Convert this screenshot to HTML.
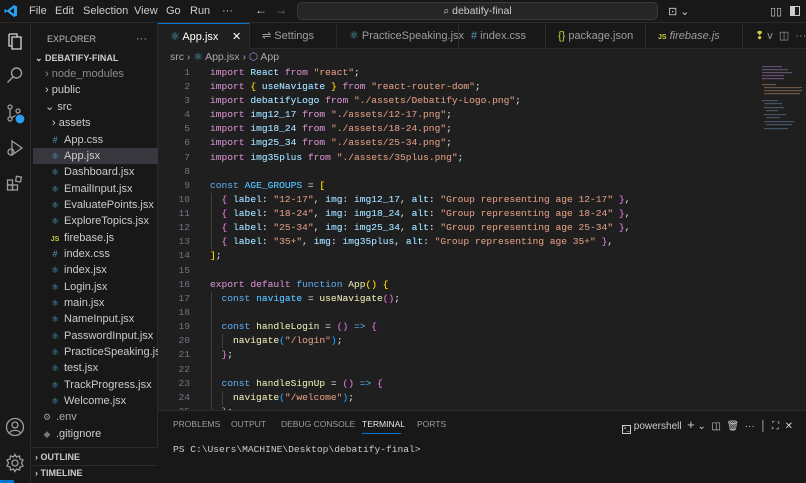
<!DOCTYPE html>
<html><head><meta charset="utf-8">
<style>
*{margin:0;padding:0;box-sizing:border-box}
body{width:806px;height:483px;overflow:hidden;background:#1f1f1f;font-family:"Liberation Sans",sans-serif;color:#ccc;position:relative;font-size:11px}
.abs{position:absolute}
#title{left:0;top:0;width:806px;height:23px;background:#181818;border-bottom:1px solid #2b2b2b}
#title .m{position:absolute;top:5px;font-size:11px;color:#ccc}
#search{left:297px;top:2px;width:361px;height:18px;background:#262626;border:1px solid #3a3a3a;border-radius:5px;color:#ccc;font-size:10.5px;text-align:center;line-height:16px}
#act{left:0;top:23px;width:31px;height:460px;background:#181818;border-right:1px solid #2b2b2b}
#side{left:31px;top:23px;width:127px;height:460px;background:#181818;border-right:1px solid #2b2b2b}
.row{position:absolute;left:0;width:127px;height:16px;line-height:16px;font-size:11px;color:#ccc;white-space:nowrap}
.ic{display:inline-block;width:12px;font-size:9px;color:#4fa6c7;text-align:center;margin-right:3px}
#tabs{left:158px;top:23px;width:648px;height:26px;background:#181818;border-bottom:1px solid #2b2b2b}
.tab{position:absolute;top:0;height:26px;line-height:26px;font-size:11px;color:#9d9d9d;border-right:1px solid #2b2b2b;padding-left:12px;white-space:nowrap}
#code{left:158px;top:49px;width:648px;height:361px;background:#1f1f1f}
.ln{position:absolute;left:160px;width:30px;text-align:right;font-family:"Liberation Mono",monospace;font-size:9.6px;color:#6e7681;height:14px;line-height:14px}
.cl{position:absolute;left:210px;font-family:"Liberation Mono",monospace;font-size:9.6px;color:#d4d4d4;white-space:pre;height:14px;line-height:14px;text-shadow:0 0 0.3px currentColor}
.k{color:#c586c0}.b{color:#569cd6}.v{color:#9cdcfe}.c{color:#4fc1ff}.s{color:#ce9178}.f{color:#dcdcaa}.y{color:#ffd700}.p{color:#da70d6}.l{color:#179fff}
#panel{left:158px;top:410px;width:648px;height:73px;background:#181818;border-top:1px solid #2b2b2b}
.pt{position:absolute;top:8px;font-size:8.5px;color:#9d9d9d}
</style></head><body>

<div id="title" class="abs">
  <svg class="abs" style="left:4px;top:4px" width="14" height="14" viewBox="0 0 14 14"><path d="M10 1 L13 2.5 V11.5 L10 13 L3 7.5 L1 9 L0.5 8.5 V5.5 L1 5 L3 6.5 Z M10 4 L6 7 L10 10 Z" fill="#2a9df4"/></svg>
  <span class="m" style="left:29px">File</span>
  <span class="m" style="left:55px">Edit</span>
  <span class="m" style="left:83px">Selection</span>
  <span class="m" style="left:134px">View</span>
  <span class="m" style="left:166px">Go</span>
  <span class="m" style="left:190px">Run</span>
  <span class="m" style="left:222px">···</span>
  <span class="m" style="left:255px;font-size:12px;top:3px">←</span>
  <span class="m" style="left:275px;font-size:12px;top:3px;color:#777">→</span>
  <div id="search" class="abs">⌕ debatify-final</div>
  <span class="m" style="left:668px">⊡ ⌄</span>
  <span class="m" style="left:770px">▯▯</span>
  <span class="abs" style="left:790px;top:6px;width:10px;height:10px;border:1px solid #ccc;border-left:5px solid #ccc"></span>
</div>

<div id="act" class="abs">
  <svg class="abs" style="left:6px;top:9px" width="18" height="20" viewBox="0 0 18 20" fill="none" stroke="#d7d7d7" stroke-width="1.3"><path d="M6 5 V17 H15 V5 Z M3 2 H11 V5 M3 2 V14 H6"/></svg>
  <svg class="abs" style="left:6px;top:43px" width="18" height="18" viewBox="0 0 18 18" fill="none" stroke="#9d9d9d" stroke-width="1.4"><circle cx="10.5" cy="7" r="5"/><path d="M7 11 L1.5 16.5"/></svg>
  <svg class="abs" style="left:5px;top:80px" width="22" height="22" viewBox="0 0 22 22" fill="none" stroke="#9d9d9d" stroke-width="1.3"><circle cx="5" cy="4" r="2"/><circle cx="5" cy="16" r="2"/><circle cx="13" cy="8" r="2"/><path d="M5 6 V14 M13 10 C13 13 8 13 6 15"/><circle cx="15" cy="16" r="5" fill="#2a9df4" stroke="#181818"/></svg>
  <svg class="abs" style="left:6px;top:116px" width="18" height="18" viewBox="0 0 18 18" fill="none" stroke="#9d9d9d" stroke-width="1.3"><path d="M6 2 L16 9 L6 16 Z"/><circle cx="5" cy="13" r="3"/></svg>
  <svg class="abs" style="left:6px;top:152px" width="18" height="18" viewBox="0 0 18 18" fill="none" stroke="#9d9d9d" stroke-width="1.3"><rect x="1.5" y="5" width="5" height="5"/><rect x="1.5" y="10" width="5" height="5"/><rect x="6.5" y="10" width="5" height="5"/><rect x="10" y="1.5" width="5" height="5" transform="rotate(10 12 4)"/></svg>
  <svg class="abs" style="left:5px;top:394px" width="20" height="20" viewBox="0 0 20 20" fill="none" stroke="#9d9d9d" stroke-width="1.3"><circle cx="10" cy="10" r="8.5"/><circle cx="10" cy="8" r="3"/><path d="M4.5 16 C6 12.5 14 12.5 15.5 16"/></svg>
  <svg class="abs" style="left:5px;top:430px" width="20" height="20" viewBox="0 0 20 20" fill="none" stroke="#9d9d9d" stroke-width="1.3"><circle cx="10" cy="10" r="3"/><path d="M10 1.5 L11.5 4 L14.5 3 L15 6 L18 7 L16.5 10 L18 13 L15 14 L14.5 17 L11.5 16 L10 18.5 L8.5 16 L5.5 17 L5 14 L2 13 L3.5 10 L2 7 L5 6 L5.5 3 L8.5 4 Z"/></svg>
</div>

<div id="side" class="abs">
  <div class="row" style="top:8px;left:16px;font-size:9px;color:#bbb">EXPLORER</div>
  <div class="row" style="top:8px;left:105px;width:20px;color:#bbb">···</div>
  <div class="row" style="top:27px;left:4px;font-size:9px;font-weight:bold;color:#ccc">⌄ DEBATIFY-FINAL</div>
  <div class="row" style="top:43px;left:14px;color:#8c8c8c">› node_modules</div>
  <div class="row" style="top:59px;left:14px">› public</div>
  <div class="row" style="top:76px;left:14px">⌄ src</div>
  <div class="row" style="top:92px;left:21px">› assets</div>
  <div class="row" style="top:109px;left:18px"><span class="ic" style="color:#519aba">#</span>App.css</div>
  <div class="row" style="top:125px;left:2px;padding-left:16px;background:#37373d;width:125px"><span class="ic">⚛</span>App.jsx</div>
  <div class="row" style="top:141px;left:18px"><span class="ic">⚛</span>Dashboard.jsx</div>
  <div class="row" style="top:158px;left:18px"><span class="ic">⚛</span>EmailInput.jsx</div>
  <div class="row" style="top:174px;left:18px"><span class="ic">⚛</span>EvaluatePoints.jsx</div>
  <div class="row" style="top:190px;left:18px"><span class="ic">⚛</span>ExploreTopics.jsx</div>
  <div class="row" style="top:207px;left:18px"><span class="ic" style="color:#cbcb41;font-weight:bold;font-size:7px">JS</span>firebase.js</div>
  <div class="row" style="top:223px;left:18px"><span class="ic" style="color:#519aba">#</span>index.css</div>
  <div class="row" style="top:239px;left:18px"><span class="ic">⚛</span>index.jsx</div>
  <div class="row" style="top:256px;left:18px"><span class="ic">⚛</span>Login.jsx</div>
  <div class="row" style="top:272px;left:18px"><span class="ic">⚛</span>main.jsx</div>
  <div class="row" style="top:288px;left:18px"><span class="ic">⚛</span>NameInput.jsx</div>
  <div class="row" style="top:305px;left:18px"><span class="ic">⚛</span>PasswordInput.jsx</div>
  <div class="row" style="top:321px;left:18px"><span class="ic">⚛</span>PracticeSpeaking.jsx</div>
  <div class="row" style="top:337px;left:18px"><span class="ic">⚛</span>test.jsx</div>
  <div class="row" style="top:354px;left:18px"><span class="ic">⚛</span>TrackProgress.jsx</div>
  <div class="row" style="top:370px;left:18px"><span class="ic">⚛</span>Welcome.jsx</div>
  <div class="row" style="top:386px;left:10px;color:#aaa"><span class="ic" style="color:#999">⚙</span>.env</div>
  <div class="row" style="top:403px;left:10px"><span class="ic" style="color:#777">◆</span>.gitignore</div>
  <div class="abs" style="left:0;top:424px;width:127px;height:36px;background:#181818;border-top:1px solid #2b2b2b"></div>
  <div class="row" style="top:426px;left:4px;font-size:9px;font-weight:bold">› OUTLINE</div>
  <div class="abs" style="left:0;top:442px;width:127px;border-top:1px solid #2b2b2b"></div>
  <div class="row" style="top:442px;left:4px;font-size:9px;font-weight:bold">› TIMELINE</div>
</div>
<div class="abs" style="left:0;top:480px;width:14px;height:3px;background:#0078d4"></div>

<div id="tabs" class="abs">
  <div class="tab" style="left:0;width:92px;background:#1f1f1f;color:#fff;border-top:1px solid #0078d4;height:27px"><span style="color:#4fa6c7">⚛</span> App.jsx<span style="position:absolute;left:74px">✕</span></div>
  <div class="tab" style="left:92px;width:87px">⇌ Settings</div>
  <div class="tab" style="left:179px;width:122px"><span style="color:#4fa6c7">⚛</span> PracticeSpeaking.jsx</div>
  <div class="tab" style="left:301px;width:87px"><span style="color:#519aba">#</span> index.css</div>
  <div class="tab" style="left:388px;width:100px"><span style="color:#cbcb41">{}</span> package.json</div>
  <div class="tab" style="left:488px;width:97px"><span style="color:#cbcb41;font-size:7px;font-weight:bold">JS</span> <i>firebase.js</i></div>
  <div class="tab" style="left:585px;border:none"><span style="color:#cbcb41">❢</span> v &nbsp;◫ &nbsp;···</div>
</div>

<div id="code" class="abs"></div>
<div class="abs" style="left:170px;top:51px;font-size:10.5px;color:#a9a9a9;white-space:nowrap">src › <span style="color:#4fa6c7">⚛</span> App.jsx › <span style="color:#b180d7">⬡</span> App</div>

<div class="ln" style="top:66px">1</div><div class="cl" style="top:66px"><span class="k">import</span> <span class="v">React</span> <span class="k">from</span> <span class="s">"react"</span>;</div>
<div class="ln" style="top:80px">2</div><div class="cl" style="top:80px"><span class="k">import</span> <span class="y">{</span> <span class="v">useNavigate</span> <span class="y">}</span> <span class="k">from</span> <span class="s">"react-router-dom"</span>;</div>
<div class="ln" style="top:94px">3</div><div class="cl" style="top:94px"><span class="k">import</span> <span class="v">debatifyLogo</span> <span class="k">from</span> <span class="s">"./assets/Debatify-Logo.png"</span>;</div>
<div class="ln" style="top:108px">4</div><div class="cl" style="top:108px"><span class="k">import</span> <span class="v">img12_17</span> <span class="k">from</span> <span class="s">"./assets/12-17.png"</span>;</div>
<div class="ln" style="top:122px">5</div><div class="cl" style="top:122px"><span class="k">import</span> <span class="v">img18_24</span> <span class="k">from</span> <span class="s">"./assets/18-24.png"</span>;</div>
<div class="ln" style="top:136px">6</div><div class="cl" style="top:136px"><span class="k">import</span> <span class="v">img25_34</span> <span class="k">from</span> <span class="s">"./assets/25-34.png"</span>;</div>
<div class="ln" style="top:151px">7</div><div class="cl" style="top:151px"><span class="k">import</span> <span class="v">img35plus</span> <span class="k">from</span> <span class="s">"./assets/35plus.png"</span>;</div>
<div class="ln" style="top:165px">8</div>
<div class="ln" style="top:179px">9</div><div class="cl" style="top:179px"><span class="b">const</span> <span class="c">AGE_GROUPS</span> = <span class="y">[</span></div>
<div class="ln" style="top:193px">10</div><div class="cl" style="top:193px">  <span class="p">{</span> <span class="v">label</span>: <span class="s">"12-17"</span>, <span class="v">img</span>: <span class="v">img12_17</span>, <span class="v">alt</span>: <span class="s">"Group representing age 12-17"</span> <span class="p">}</span>,</div>
<div class="ln" style="top:207px">11</div><div class="cl" style="top:207px">  <span class="p">{</span> <span class="v">label</span>: <span class="s">"18-24"</span>, <span class="v">img</span>: <span class="v">img18_24</span>, <span class="v">alt</span>: <span class="s">"Group representing age 18-24"</span> <span class="p">}</span>,</div>
<div class="ln" style="top:221px">12</div><div class="cl" style="top:221px">  <span class="p">{</span> <span class="v">label</span>: <span class="s">"25-34"</span>, <span class="v">img</span>: <span class="v">img25_34</span>, <span class="v">alt</span>: <span class="s">"Group representing age 25-34"</span> <span class="p">}</span>,</div>
<div class="ln" style="top:235px">13</div><div class="cl" style="top:235px">  <span class="p">{</span> <span class="v">label</span>: <span class="s">"35+"</span>, <span class="v">img</span>: <span class="v">img35plus</span>, <span class="v">alt</span>: <span class="s">"Group representing age 35+"</span> <span class="p">}</span>,</div>
<div class="ln" style="top:249px">14</div><div class="cl" style="top:249px"><span class="y">]</span>;</div>
<div class="ln" style="top:264px">15</div>
<div class="ln" style="top:278px">16</div><div class="cl" style="top:278px"><span class="k">export</span> <span class="k">default</span> <span class="b">function</span> <span class="f">App</span><span class="y">()</span> <span class="y">{</span></div>
<div class="ln" style="top:292px">17</div><div class="cl" style="top:292px">  <span class="b">const</span> <span class="c">navigate</span> = <span class="f">useNavigate</span><span class="p">()</span>;</div>
<div class="ln" style="top:306px">18</div>
<div class="ln" style="top:320px">19</div><div class="cl" style="top:320px">  <span class="b">const</span> <span class="f">handleLogin</span> = <span class="p">()</span> <span class="b">=&gt;</span> <span class="p">{</span></div>
<div class="ln" style="top:334px">20</div><div class="cl" style="top:334px">    <span class="f">navigate</span><span class="l">(</span><span class="s">"/login"</span><span class="l">)</span>;</div>
<div class="ln" style="top:348px">21</div><div class="cl" style="top:348px">  <span class="p">}</span>;</div>
<div class="ln" style="top:363px">22</div>
<div class="ln" style="top:377px">23</div><div class="cl" style="top:377px">  <span class="b">const</span> <span class="f">handleSignUp</span> = <span class="p">()</span> <span class="b">=&gt;</span> <span class="p">{</span></div>
<div class="ln" style="top:391px">24</div><div class="cl" style="top:391px">    <span class="f">navigate</span><span class="l">(</span><span class="s">"/welcome"</span><span class="l">)</span>;</div>
<div class="ln" style="top:405px">25</div><div class="cl" style="top:405px">  <span class="p">}</span>;</div>
<div class="abs" style="left:211px;top:193px;width:1px;height:56px;background:#404040"></div>
<div class="abs" style="left:211px;top:292px;width:1px;height:118px;background:#404040"></div>
<div class="abs" style="left:222px;top:334px;width:1px;height:14px;background:#404040"></div>
<div class="abs" style="left:222px;top:391px;width:1px;height:14px;background:#404040"></div>
<svg class="abs" style="left:760px;top:64px" width="42" height="70">
 <g fill="#8a6fa0" opacity=".6"><rect x="2" y="2" width="20" height="1.2"/><rect x="2" y="5" width="26" height="1.2"/><rect x="2" y="8" width="30" height="1.2"/><rect x="2" y="11" width="22" height="1.2"/><rect x="2" y="14" width="22" height="1.2"/></g>
 <g fill="#a57a5c" opacity=".6"><rect x="2" y="20" width="14" height="1.2"/><rect x="4" y="23" width="38" height="1.2"/><rect x="4" y="26" width="38" height="1.2"/><rect x="4" y="29" width="36" height="1.2"/></g>
 <g fill="#6a8aa8" opacity=".5"><rect x="2" y="36" width="16" height="1.2"/><rect x="4" y="39" width="18" height="1.2"/><rect x="4" y="43" width="20" height="1.2"/><rect x="6" y="46" width="12" height="1.2"/><rect x="4" y="50" width="22" height="1.2"/><rect x="6" y="53" width="14" height="1.2"/><rect x="4" y="57" width="30" height="1.2"/><rect x="6" y="60" width="26" height="1.2"/><rect x="4" y="64" width="24" height="1.2"/></g>
</svg>

<div id="panel" class="abs">
  <span class="pt" style="left:15px">PROBLEMS</span>
  <span class="pt" style="left:73px">OUTPUT</span>
  <span class="pt" style="left:123px">DEBUG CONSOLE</span>
  <span class="pt" style="left:204px;color:#e7e7e7">TERMINAL</span>
  <div class="abs" style="left:204px;top:22px;width:39px;height:1px;background:#0078d4"></div>
  <span class="pt" style="left:259px">PORTS</span>
  <span class="abs" style="left:464px;top:6px;font-size:10px;color:#ccc"><span style="display:inline-block;width:9px;height:9px;border:1px solid #ccc;font-size:6px;line-height:7px;vertical-align:-1px">&gt;_</span> powershell &nbsp;<span style="font-size:13px">+</span> ⌄ &nbsp;◫ &nbsp;🗑 &nbsp;··· &nbsp;│ &nbsp;⛶ &nbsp;✕</span>
  <div class="abs" style="left:15px;top:33px;font-family:'Liberation Mono',monospace;font-size:9.6px;color:#ccc;white-space:pre">PS C:\Users\MACHINE\Desktop\debatify-final&gt;</div>
</div>
</body></html>
